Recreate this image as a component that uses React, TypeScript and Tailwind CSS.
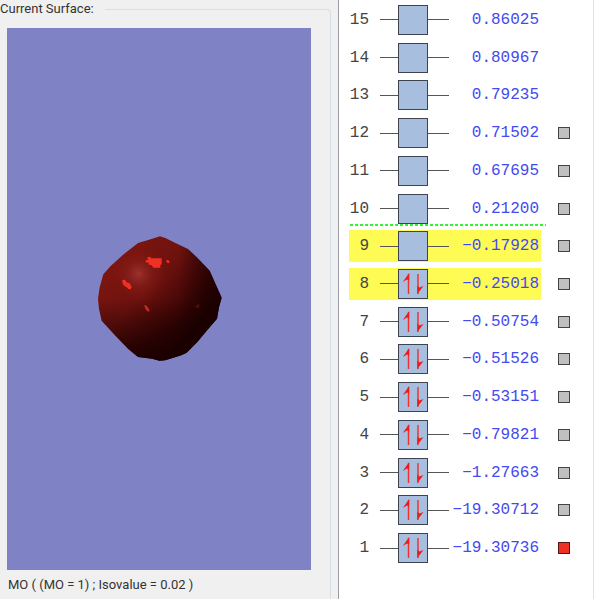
type Orbital = {
  id: number;
  energy: string;
  occupied?: boolean;
  highlighted?: boolean;
  selectable?: boolean;
  selected?: boolean;
};

const orbitals: Orbital[] = [
  { id: 15, energy: "0.86025" },
  { id: 14, energy: "0.80967" },
  { id: 13, energy: "0.79235" },
  { id: 12, energy: "0.71502", selectable: true },
  { id: 11, energy: "0.67695", selectable: true },
  { id: 10, energy: "0.21200", selectable: true },
  { id: 9, energy: "−0.17928", selectable: true, highlighted: true },
  { id: 8, energy: "−0.25018", selectable: true, highlighted: true, occupied: true },
  { id: 7, energy: "−0.50754", selectable: true, occupied: true },
  { id: 6, energy: "−0.51526", selectable: true, occupied: true },
  { id: 5, energy: "−0.53151", selectable: true, occupied: true },
  { id: 4, energy: "−0.79821", selectable: true, occupied: true },
  { id: 3, energy: "−1.27663", selectable: true, occupied: true },
  { id: 2, energy: "−19.30712", selectable: true, occupied: true },
  { id: 1, energy: "−19.30736", selectable: true, occupied: true, selected: true },
];

// Isosurface of the selected orbital
const Surface = () => (
  <svg width="160" height="160" viewBox="-3 -3 480 480" aria-hidden="true">
    <defs>
      <linearGradient id="body" x1="0.12" y1="0.2" x2="0.78" y2="0.8">
        <stop offset="0" stopColor="#7d150f" />
        <stop offset="0.4" stopColor="#6e120e" />
        <stop offset="0.7" stopColor="#450706" />
        <stop offset="0.95" stopColor="#1e0000" />
      </linearGradient>
      <radialGradient id="shine" gradientUnits="userSpaceOnUse" cx="176" cy="162" r="85">
        <stop offset="0" stopColor="#a83c38" stopOpacity="0.75" />
        <stop offset="0.5" stopColor="#8c211d" stopOpacity="0.4" />
        <stop offset="1" stopColor="#7a1511" stopOpacity="0" />
      </radialGradient>
      <linearGradient id="floor" x1="0" y1="0" x2="0" y2="1">
        <stop offset="0.5" stopColor="#1a0000" stopOpacity="0" />
        <stop offset="1" stopColor="#1a0000" stopOpacity="0.9" />
      </linearGradient>
      <linearGradient id="side" x1="0" y1="0" x2="1" y2="0">
        <stop offset="0.65" stopColor="#1a0000" stopOpacity="0" />
        <stop offset="1" stopColor="#1a0000" stopOpacity="0.8" />
      </linearGradient>
      <path
        id="blob"
        d="M240 49 L256 54 L288 70 L324 87 L352 113 L389 152 L405 188 L425 233 L417 262 L411 296 L382 330 L352 366 L320 398 L304 406 L256 421 L238 422 L216 416 L174 411 L144 386 L105 346 L65 302 L57 266 L54 236 L59 202 L70 163 L92 138 L132 102 L174 69 L212 58 Z"
      />
    </defs>
    <use href="#blob" fill="url(#body)" />
    <use href="#blob" fill="url(#floor)" />
    <use href="#blob" fill="url(#side)" />
    <use href="#blob" fill="url(#shine)" />
    <g fill="#ee3124">
      <path d="M203 111 L212 111 L212 115 L245 115 L245 133 L241 135 L241 143 L220 143 L215 136 L206 134 L206 128 L197 127 L197 121 L203 120 Z" />
      <path d="M260 120 h5 l3 4 v5 h-5 l-4 -4 Z" />
      <path d="M127 180 L135 179 L140 187 L149 190 L155 201 L152 208 L145 207 L139 201 L132 197 L127 188 Z" />
      <path d="M192 256 L198 256 L205 264 L209 273 L204 275 L197 268 Z" fill="#c9291f" />
      <path d="M354 253 h4 v10 h-6 l-8 -3 Z" fill="#520b08" />
    </g>
  </svg>
);

// Paired electrons: one spin up, one spin down
const SpinPair = () => (
  <svg width="28" height="28" viewBox="0 0 28 28" aria-hidden="true">
    <path d="M9.5 4V24M19 4V24" stroke="#f0302c" strokeWidth="1.4" />
    <path d="M10.2 3V10.5L8 9.5L3.8 12Z" fill="#f01a18" />
    <path d="M18.3 24V15.5L20.5 17.5L24.5 16Z" fill="#f01a18" />
  </svg>
);

const OrbitalRow = ({ orbital }: { orbital: Orbital }) => (
  <li className="relative flex items-center pl-[10px]">
    {/* gap between the frontier levels and the virtual ones above */}
    {orbital.id === 9 && (
      <svg className="absolute -top-[3px] left-[11px] h-[2px] w-[196px]" aria-hidden="true">
        <path d="M0 1H196" stroke="#33f52e" strokeWidth="2" strokeDasharray="3 2" shapeRendering="crispEdges" />
      </svg>
    )}
    <label
      htmlFor={`mo-${orbital.id}`}
      className={`flex h-8 w-48 items-center ${orbital.highlighted ? "bg-[#fffb55]" : ""}`}
    >
      <span className="w-5 text-right text-[#444444]">{orbital.id}</span>
      <span className="ml-[11px] h-px w-[18px] bg-[#555555]" />
      <span className="size-[30px] border border-[#3d4450] bg-[#a7bede]">
        {orbital.occupied && <SpinPair />}
      </span>
      <span className="h-px w-[21px] bg-[#555555]" />
      <span className="flex w-[90px] justify-end text-[#434af0]">{orbital.energy}</span>
    </label>
    {orbital.selectable && (
      <input
        type="checkbox"
        id={`mo-${orbital.id}`}
        defaultChecked={orbital.selected}
        className="ml-[17px] size-3 appearance-none border border-[#444444] bg-[#c0c0c0] checked:border-[#5a1510] checked:bg-[#ee3124]"
      />
    )}
  </li>
);

export default function App() {
  return (
    <main className="flex min-h-screen bg-[#f0f0f0]">
      <section className="flex flex-1 flex-col pr-[7px] font-['Roboto',sans-serif] text-[13px] text-[#333333]">
        <fieldset className="flex min-w-0 flex-1 flex-col rounded-tr border-t border-r border-[#d5dfe8] pr-[19px] pl-[7px]">
          <legend className="-ml-[7px] pr-[11px] leading-[18px]">Current Surface:</legend>
          <div className="mt-[10px] flex flex-1 items-center justify-center bg-[#8082c6]">
            <Surface />
          </div>
          <p className="py-[5px] pl-px leading-[19px]">MO ( (MO = 1) ; Isovalue = 0.02 )</p>
        </fieldset>
      </section>
      <section className="flex w-64 shrink-0 border-r border-l border-r-[#e2e2e2] border-l-[#9a9ca3] bg-white pt-px pb-8 font-['Liberation_Mono',monospace] text-base">
        <ul className="grid flex-1 auto-rows-fr">
          {orbitals.map((orbital) => (
            <OrbitalRow key={orbital.id} orbital={orbital} />
          ))}
        </ul>
      </section>
    </main>
  );
}
